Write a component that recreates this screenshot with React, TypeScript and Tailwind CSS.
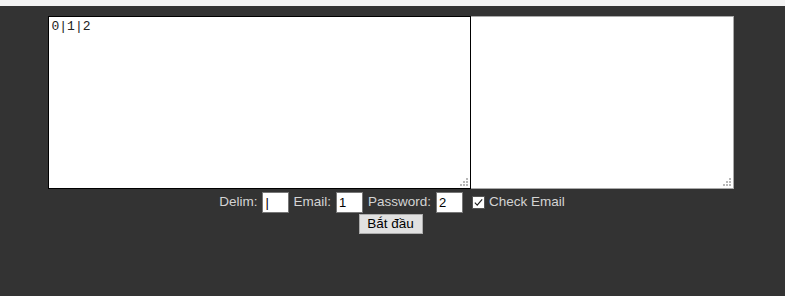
import { useState } from "react";

function Grip() {
  // dotted resize grip like the one in the reference
  const dots = [
    [6, 0],
    [3, 3],
    [6, 3],
    [0, 6],
    [3, 6],
    [6, 6],
  ];
  return (
    <svg
      width="8"
      height="8"
      className="absolute right-[3px] bottom-[3px] pointer-events-none"
    >
      {dots.map(([x, y]) => (
        <rect key={`${x}-${y}`} x={x} y={y} width="2" height="2" fill="#b8b8b8" />
      ))}
    </svg>
  );
}

export default function App() {
  const [list, setList] = useState("0|1|2");
  const [checked, setChecked] = useState(true);

  return (
    <div className="w-[785px] h-[296px] bg-[#333333] font-['Liberation_Sans',sans-serif] text-[13.5px] text-[#d4d4d4]">
      {/* top strip */}
      <div className="h-[6px] bg-[#f3f3f3]" />

      <div className="flex flex-col items-center pt-[10px] pr-[4px]">
        <div className="flex">
          <div className="relative">
            <textarea
              value={list}
              onChange={(e) => setList(e.target.value)}
              className="block resize-none w-[423px] h-[173px] bg-white border border-black px-[3px] py-[2px] font-['Liberation_Mono',monospace] text-[13px] leading-[16px] text-[#222] outline-none"
            />
            <Grip />
          </div>
          <div className="relative">
            <textarea
              readOnly
              className="block resize-none w-[263px] h-[173px] bg-white border border-[#a9a9a9] border-l-0 outline-none"
            />
            <Grip />
          </div>
        </div>

        {/* options */}
        <div className="flex items-center h-[24px] mt-[1px] pl-[3px]">
          <span>Delim:</span>
          <input
            defaultValue="|"
            className="w-[27px] h-[21px] ml-[5px] mr-[4px] px-[2px] bg-white border border-[#767676] text-black text-[13px] outline-none"
          />
          <span>Email:</span>
          <input
            defaultValue="1"
            className="w-[27px] h-[21px] ml-[5px] mr-[5px] px-[2px] bg-white border border-[#767676] text-black text-[13px] outline-none"
          />
          <span>Password:</span>
          <input
            defaultValue="2"
            className="w-[27px] h-[21px] ml-[5px] mr-[9px] px-[2px] bg-white border border-[#767676] text-black text-[13px] outline-none"
          />
          <label className="flex items-center gap-[4px] cursor-pointer">
            <span
              onClick={() => setChecked(!checked)}
              className="w-[13px] h-[13px] bg-white border border-[#555] flex items-center justify-center"
            >
              {checked && (
                <svg viewBox="0 0 12 12" className="w-[11px] h-[11px]">
                  <path d="M2 6.2 L4.6 8.8 L10 2.6" fill="none" stroke="#222" strokeWidth="1.3" />
                </svg>
              )}
            </span>
            <span>Check Email</span>
          </label>
        </div>

        <button className="h-[20px] w-[64px] bg-[#e1e1e1] border border-[#adadad] text-black text-[13.5px] leading-none">
          Bắt đầu
        </button>
      </div>
    </div>
  );
}
